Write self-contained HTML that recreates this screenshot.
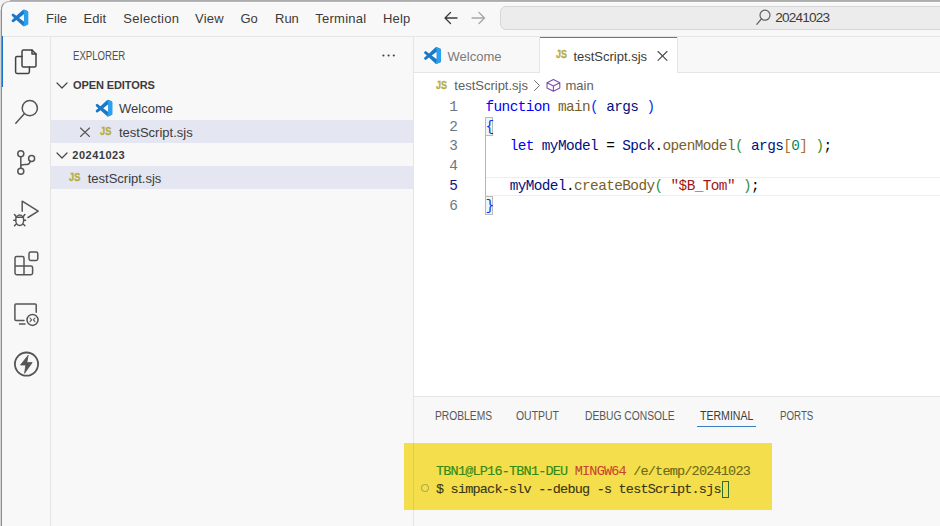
<!DOCTYPE html>
<html><head><meta charset="utf-8">
<style>
*{margin:0;padding:0;box-sizing:border-box}
html,body{width:940px;height:526px;overflow:hidden;background:#f8f8f8;font-family:"Liberation Sans",sans-serif;color:#3b3b3b}
.a{position:absolute;white-space:pre;line-height:1}
.mono{font-family:"Liberation Mono",monospace}
#svg{position:absolute;left:0;top:0}
</style></head><body>
<!-- background behind window -->
<div class="a" style="left:0;top:0;width:940px;height:1.6px;background:#adadad"></div>
<div class="a" style="left:0;top:0;width:1.6px;height:526px;background:#d4d4d4"></div>
<div class="a" style="left:0;top:0;width:10px;height:10px;background:#f2f2f2"></div>
<!-- window -->
<div class="a" style="left:1px;top:1px;width:939px;height:525px;background:#f8f8f8;border-top-left-radius:8px;border-top:1px solid #b4b4b4;border-left:1px solid #8c8c8c"></div>
<div class="a" style="left:9px;top:2px;width:931px;height:1.2px;background:#fcfcfc"></div>
<div class="a" style="left:1.5px;top:36px;width:1.6px;height:51px;background:#1a73c8"></div>
<!-- title bar border -->
<div class="a" style="left:3px;top:36px;width:937px;height:1px;background:#e5e5e5"></div>
<!-- activity bar border -->
<div class="a" style="left:50px;top:37px;width:1px;height:489px;background:#e5e5e5"></div>
<!-- sidebar border -->
<div class="a" style="left:413px;top:37px;width:1px;height:489px;background:#e5e5e5"></div>
<!-- editor -->
<div class="a" style="left:414px;top:73px;width:526px;height:323px;background:#fff"></div>
<div class="a" style="left:414px;top:72px;width:526px;height:1px;background:#e5e5e5"></div>
<!-- active tab -->
<div class="a" style="left:540px;top:37px;width:138px;height:36px;background:#fff;border-right:1px solid #e5e5e5"></div>
<div class="a" style="left:540px;top:37px;width:137px;height:1.3px;background:#3f7fc2"></div>
<div class="a" style="left:539px;top:37px;width:1px;height:36px;background:#e5e5e5"></div>
<!-- panel border -->
<div class="a" style="left:414px;top:396px;width:526px;height:1px;background:#e5e5e5"></div>

<!-- menu -->
<div class="a" style="left:46px;top:12.1px;font-size:13px;letter-spacing:0.05px">File</div>
<div class="a" style="left:83.5px;top:12.1px;font-size:13px;letter-spacing:0.05px">Edit</div>
<div class="a" style="left:123.2px;top:12.1px;font-size:13px;letter-spacing:0.3px">Selection</div>
<div class="a" style="left:195px;top:12.1px;font-size:13px;letter-spacing:0.2px">View</div>
<div class="a" style="left:240.5px;top:12.1px;font-size:13px">Go</div>
<div class="a" style="left:275px;top:12.1px;font-size:13px">Run</div>
<div class="a" style="left:315.3px;top:12.1px;font-size:13px;letter-spacing:0.25px">Terminal</div>
<div class="a" style="left:383px;top:12.1px;font-size:13px;letter-spacing:0.2px">Help</div>
<!-- search box -->
<div class="a" style="left:500px;top:5.5px;width:460px;height:24.5px;background:#ececec;border:1px solid #d6d6d6;border-radius:6px"></div>
<div class="a" style="left:775.3px;top:11.3px;font-size:13.6px;letter-spacing:-0.8px">20241023</div>

<!-- sidebar -->
<div class="a" style="left:73px;top:49.6px;font-size:12px;color:#505050;transform:scaleX(0.8);transform-origin:0 0">EXPLORER</div>
<div class="a" style="left:73px;top:79.5px;font-size:11px;font-weight:bold;letter-spacing:-0.1px">OPEN EDITORS</div>
<div class="a" style="left:119px;top:102.3px;font-size:13px">Welcome</div>
<div class="a" style="left:51px;top:120px;width:362px;height:23px;background:#e4e6f1"></div>
<div class="a" style="left:100.3px;top:125.6px;font-size:11.3px;font-weight:bold;color:#b5ae46;transform:scaleX(0.82);transform-origin:0 0;-webkit-text-stroke:0.35px #b5ae46">JS</div>
<div class="a" style="left:119px;top:125.6px;font-size:13px">testScript.sjs</div>
<div class="a" style="left:72.3px;top:150.3px;font-size:11px;font-weight:bold;letter-spacing:0.5px">20241023</div>
<div class="a" style="left:51px;top:166px;width:362px;height:23px;background:#e4e6f1"></div>
<div class="a" style="left:69px;top:171.6px;font-size:11.3px;font-weight:bold;color:#b5ae46;transform:scaleX(0.82);transform-origin:0 0;-webkit-text-stroke:0.35px #b5ae46">JS</div>
<div class="a" style="left:87.7px;top:171.6px;font-size:13px">testScript.sjs</div>

<!-- tabs -->
<div class="a" style="left:447.5px;top:49.6px;font-size:13px;color:#7a7a7a">Welcome</div>
<div class="a" style="left:555.5px;top:48.8px;font-size:11.3px;font-weight:bold;color:#b5ae46;transform:scaleX(0.8);transform-origin:0 0;-webkit-text-stroke:0.35px #b5ae46">JS</div>
<div class="a" style="left:573.4px;top:49.7px;font-size:13px">testScript.sjs</div>
<!-- breadcrumb -->
<div class="a" style="left:435.6px;top:79.5px;font-size:11.3px;font-weight:bold;color:#b5ae46;transform:scaleX(0.8);transform-origin:0 0;-webkit-text-stroke:0.35px #b5ae46">JS</div>
<div class="a" style="left:454.3px;top:78.9px;font-size:13px;color:#616161">testScript.sjs</div>
<div class="a" style="left:565.5px;top:78.9px;font-size:13px;color:#616161">main</div>

<!-- current line highlight -->
<div class="a" style="left:486px;top:176.5px;width:454px;height:19px;border-top:1.5px solid #eeeeee;border-bottom:1.5px solid #eeeeee"></div>
<!-- indent guide -->
<div class="a" style="left:485.2px;top:136px;width:1.3px;height:60px;background:#b4b4b4"></div>
<!-- bracket match boxes -->
<div class="a" style="left:485.3px;top:117px;width:8px;height:19px;border:1px solid #b9b9b9;background:rgba(0,100,0,0.06)"></div>
<div class="a" style="left:485.3px;top:196.3px;width:8px;height:19px;border:1px solid #b9b9b9;background:rgba(0,100,0,0.06)"></div>

<!-- code -->
<div class="a mono" style="left:440px;top:98px;font-size:14.4px;line-height:19.7px;color:#6e7681;text-align:right;width:18px">1
2
3
4
<span style="color:#171184">5</span>
6</div>
<div class="a mono" style="left:485.5px;top:98px;font-size:14.4px;letter-spacing:-0.59px;line-height:19.7px;color:#000"><span style="color:#0000ff">function</span> <span style="color:#795e26">main</span><span style="color:#0431fa">(</span> <span style="color:#001080">args</span> <span style="color:#0431fa">)</span>
<span style="color:#0431fa">{</span>
   <span style="color:#0000ff">let</span> <span style="color:#001080">myModel</span> = <span style="color:#001080">Spck</span>.<span style="color:#795e26">openModel</span><span style="color:#319331">(</span> <span style="color:#001080">args</span><span style="color:#a9712e">[</span><span style="color:#098658">0</span><span style="color:#a9712e">]</span> <span style="color:#319331">)</span>;

   <span style="color:#001080">myModel</span>.<span style="color:#795e26">createBody</span><span style="color:#319331">(</span> <span style="color:#a31515">"$B_Tom"</span> <span style="color:#319331">)</span>;
<span style="color:#0431fa">}</span></div>

<!-- panel tabs -->
<div class="a" style="color:#575757;left:435.2px;top:410.2px;font-size:12px;transform:scaleX(0.855);transform-origin:0 0">PROBLEMS</div>
<div class="a" style="color:#575757;left:516.4px;top:410.2px;font-size:12px;transform:scaleX(0.87);transform-origin:0 0">OUTPUT</div>
<div class="a" style="color:#575757;left:585px;top:410.2px;font-size:12px;transform:scaleX(0.855);transform-origin:0 0">DEBUG CONSOLE</div>
<div class="a" style="left:700.3px;top:410.2px;font-size:12px;transform:scaleX(0.88);transform-origin:0 0">TERMINAL</div>
<div class="a" style="color:#575757;left:779.7px;top:410.2px;font-size:12px;transform:scaleX(0.81);transform-origin:0 0">PORTS</div>
<div class="a" style="left:697.2px;top:426.2px;width:58.8px;height:1.3px;background:#3d7dc0"></div>

<!-- terminal -->
<div class="a" style="left:404px;top:443px;width:368px;height:67px;background:#f4de4c"></div>
<div class="a" style="left:413px;top:443px;width:1px;height:67px;background:#e2cd48"></div>
<div class="a mono" style="left:436px;top:462.8px;font-size:13.5px;letter-spacing:-0.8px;line-height:18px;color:#3a3612;-webkit-text-stroke:0.1px #3a3612"><span style="color:#338a14;-webkit-text-stroke:0.15px #338a14">TBN1@LP16-TBN1-DEU</span> <span style="color:#c8442c;-webkit-text-stroke:0.05px #c8442c">MINGW64</span> <span style="color:#6c6a16;-webkit-text-stroke:0.1px #6c6a16">/e/temp/20241023</span>
$ simpack-slv --debug -s testScript.sjs</div>
<div class="a" style="left:721.5px;top:480.5px;width:7.5px;height:17px;border:1.3px solid #2a6e36"></div>
<div class="a" style="left:421.4px;top:484.2px;width:7.4px;height:7.4px;border:1px solid #a39c55;border-radius:50%"></div>

<svg id="svg" width="940" height="526" viewBox="0 0 940 526" fill="none" stroke="#424242" stroke-width="1.5" stroke-linecap="round" stroke-linejoin="round">
<defs>
<symbol id="vsc" viewBox="0 0 100 100">
<path stroke="none" fill="#1a78c6" d="M96.46 10.8L75.86.87a6.2 6.2 0 0 0-7.1 1.2L29.35 38.04 12.17 25.01a4.17 4.17 0 0 0-5.31.24L1.34 30.27a4.17 4.17 0 0 0 0 6.17L16.24 50 1.33 63.56a4.17 4.17 0 0 0 0 6.17l5.52 5.02a4.17 4.17 0 0 0 5.31.24l17.18-13.030 39.41 35.97a6.2 6.2 0 0 0 7.1 1.2l20.6-9.93A6.25 6.25 0 0 0 100 83.57V16.43a6.25 6.25 0 0 0-3.54-5.63zM75.02 72.7L45.11 50l29.91-22.7z"/>
<path stroke="none" fill="#2ba0f0" d="M96.46 10.8L75.86.87a6.2 6.2 0 0 0-7.1 1.2L75.02 27.3v45.4l-6.26 25.23a6.2 6.2 0 0 0 7.1 1.2l20.6-9.93A6.25 6.25 0 0 0 100 83.57V16.43a6.25 6.25 0 0 0-3.54-5.63z"/>
</symbol>
</defs>
<use href="#vsc" x="11.4" y="9.4" width="17" height="17"/>
<use href="#vsc" x="95.5" y="99.7" width="17" height="17"/>
<use href="#vsc" x="424" y="47" width="17" height="17"/>
<!-- explorer icon -->
<path d="M23.5 50H32L36 54V65.5Q36 67 34.5 67H23.5Q22 67 22 65.5V51.5Q22 50 23.5 50Z"/>
<path d="M32 50V54H36"/>
<path d="M22 56.6H17Q15.6 56.6 15.6 58V72Q15.6 73.4 17 73.4H28Q29.4 73.4 29.4 72V67"/>
<!-- search -->
<circle cx="29.8" cy="108.2" r="7.6" stroke="#555"/>
<path d="M24.3 113.7L15.8 123.2" stroke="#555"/>
<!-- source control -->
<circle cx="20.8" cy="153.8" r="3" stroke="#555"/>
<circle cx="20.8" cy="171.2" r="3" stroke="#555"/>
<circle cx="31.6" cy="158.4" r="3" stroke="#555"/>
<path d="M20.8 156.8V168.2M20.8 166.2Q21.5 164.6 25 164.6H27Q29.5 164.6 30.3 161.2" stroke="#555"/>
<!-- run debug -->
<path d="M22.2 211.2V201.2L38.2 211.2L28 217.5" stroke="#555"/>
<ellipse cx="19.7" cy="220.3" rx="4" ry="5.2" stroke="#555"/>
<path d="M15.8 217.2H23.6M14.5 214.5L16 216.2M24.9 214.5L23.4 216.2M13.8 220.3H15.7M23.7 220.3H25.6M14.5 225.8L16 224.2M24.9 225.8L23.4 224.2" stroke="#555"/>
<!-- extensions -->
<path d="M15 266V258.2Q15 256.5 16.7 256.5H22.3Q24 256.5 24 258.2V266H30.9Q32.6 266 32.6 267.7V273Q32.6 274.7 30.9 274.7H16.7Q15 274.7 15 273V266H24V274.7" stroke="#555"/>
<rect x="29" y="252" width="8.8" height="8.5" rx="1.7" stroke="#555"/>
<!-- remote -->
<path d="M36.2 312.3V305.1Q36.2 304.1 35.2 304.1H15.9Q14.9 304.1 14.9 305.1V319.5Q14.9 320.5 15.9 320.5H24M19.5 324H25" stroke="#555"/>
<circle cx="32.5" cy="319.9" r="5.5" stroke="#555"/>
<path d="M30 318L31.6 319.8L30 321.6M35 318L33.4 319.8L35 321.6" stroke="#555" stroke-width="1.1"/>
<!-- lightning -->
<circle cx="26.5" cy="364.1" r="11.6" stroke="#555" stroke-width="1.8"/>
<path d="M28 355.5L20.5 365H25.8L24.6 373.3L32.2 362.6H27Z" fill="#555" stroke="#555" stroke-width="0.8"/>
<!-- more ... -->
<circle cx="383.4" cy="55.5" r="1.1" fill="#424242" stroke="none"/>
<circle cx="388.6" cy="55.5" r="1.1" fill="#424242" stroke="none"/>
<circle cx="393.8" cy="55.5" r="1.1" fill="#424242" stroke="none"/>
<!-- chevrons -->
<path d="M57 83L62 88L67 83" stroke="#454545" stroke-width="1.2"/>
<path d="M57 153L62 158L67 153" stroke="#454545" stroke-width="1.2"/>
<!-- X in open editors -->
<path d="M80.5 128L89.5 136.5M89.5 128L80.5 136.5" stroke="#555" stroke-width="1.1"/>
<!-- tab close X -->
<path d="M658 51.5L667 60.3M667 51.5L658 60.3" stroke="#4a4a4a" stroke-width="1.1"/>
<!-- breadcrumb chevron -->
<path d="M534.5 80.5L539.5 85.5L534.5 90.5" stroke="#707070" stroke-width="1"/>
<!-- cube -->
<path d="M553.4 79.6L559.8 82.8V88L553.4 91.2L547 88V82.8Z M547 82.8L553.4 86L559.8 82.8 M553.4 86V91.2" stroke="#7a4fa6" stroke-width="1.1"/>
<!-- title arrows -->
<path d="M457 18H445M450.5 12.5L445 18L450.5 23.5" stroke="#3b3b3b" stroke-width="1.3"/>
<path d="M472 18H484.5M479 12.5L484.5 18L479 23.5" stroke="#a8a8a8" stroke-width="1.3"/>
<!-- command center search -->
<circle cx="765" cy="15.2" r="5" stroke="#616161" stroke-width="1.2"/>
<path d="M761.3 19L756.8 24.4" stroke="#616161" stroke-width="1.2"/>
</svg>
</body></html>
